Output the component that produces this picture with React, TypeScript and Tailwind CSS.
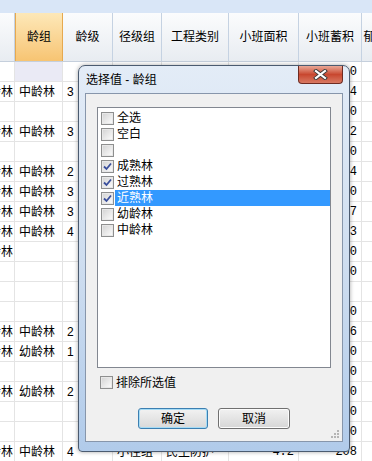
import React from "react";

const widths = ["w-[15px]", "w-[48px]", "w-[50px]", "w-[49px]", "w-[67px]", "w-[70px]", "w-[63px]", "w-[40px]"];
const headers = ["", "龄组", "龄级", "径级组", "工程类别", "小班面积", "小班蓄积", "郁闭度"];

// cells under the dialog are left empty, only the last row peeks out below it
const rows: string[][] = [
    ["", "", "", "", "", "", "0"],
    ["中龄林", "中龄林", "3", "", "", "", "4"],
    ["", "", "", "", "", "", "0"],
    ["中龄林", "中龄林", "3", "", "", "", "2"],
    ["", "", "", "", "", "", "0"],
    ["中龄林", "中龄林", "2", "", "", "", "4"],
    ["中龄林", "中龄林", "3", "", "", "", "0"],
    ["中龄林", "中龄林", "3", "", "", "", "7"],
    ["中龄林", "中龄林", "4", "", "", "", "3"],
    ["中龄林", "", "", "", "", "", "0"],
    ["", "", "", "", "", "", "0"],
    ["", "", "", "", "", "", ""],
    ["", "", "", "", "", "", "0"],
    ["中龄林", "中龄林", "2", "", "", "", "6"],
    ["中龄林", "幼龄林", "1", "", "", "", "0"],
    ["", "", "", "", "", "", "0"],
    ["中龄林", "幼龄林", "2", "", "", "", "0"],
    ["", "", "", "", "", "", "0"],
    ["", "", "", "", "", "", "0"],
    ["中龄林", "中龄林", "4", "小径组", "民生防护", "4.2", "208"],
];

const options = [
    { label: "全选", checked: false },
    { label: "空白", checked: false },
    { label: "", checked: false },
    { label: "成熟林", checked: true },
    { label: "过熟林", checked: true },
    { label: "近熟林", checked: true, selected: true },
    { label: "幼龄林", checked: false },
    { label: "中龄林", checked: false },
];

const CheckBox = ({ checked }: { checked: boolean }) => (
    <span className="flex h-[13px] w-[13px] shrink-0 items-center justify-center border border-[#8e8f8f] bg-[#f4f4f4]">
        <span className="flex h-[11px] w-[11px] items-center justify-center border border-[#e8e8e8] bg-linear-to-br from-[#d6d6d6] to-[#fafafa]">
            {checked && (
                <svg width="9" height="9" viewBox="0 0 9 9">
                    <path d="M1 4.5 L3.5 7 L8 1.5" fill="none" stroke="#3a4f9c" strokeWidth="1.8" />
                </svg>
            )}
        </span>
    </span>
);

const App = () => {
    return (
        <div className="relative h-[461px] w-[372px] overflow-hidden bg-white text-[12px] leading-none text-black font-['Liberation_Sans','Noto_Sans_CJK_SC',sans-serif]">
            {/* top band */}
            <div className="h-[13px] bg-[#d9e6f7]" />

            {/* header */}
            <div className="flex h-[49px] border-b border-[#c5cfdc] bg-linear-to-b from-[#fbfcfd] to-[#e8ecf1]">
                {headers.map((h, i) => (
                    <div
                        key={i}
                        className={`${widths[i]} flex shrink-0 items-center justify-center whitespace-nowrap border-r ${
                            i === 1
                                ? "border-l border-[#e6a94f] bg-linear-to-b from-[#fde8b8] to-[#f7c472]"
                                : "border-[#c5d2e2]"
                        }`}
                    >
                        {h}
                    </div>
                ))}
            </div>

            {/* body */}
            <div className="flex flex-col">
                {rows.map((r, ri) => (
                    <div key={ri} className="flex h-[20px] border-b border-[#e4e4e4]">
                        <div className={`${widths[0]} flex shrink-0 justify-end overflow-hidden border-r border-[#e4e4e4]`}>
                            <span className="flex items-center whitespace-nowrap pr-[1px]">{r[0]}</span>
                        </div>
                        <div className={`${widths[1]} flex shrink-0 items-center border-r border-[#e4e4e4] pl-[4px] ${ri === 0 ? "bg-[#eaeaf5]" : ""}`}>
                            {r[1]}
                        </div>
                        <div className={`${widths[2]} flex shrink-0 items-center border-r border-[#e4e4e4] pl-[4px]`}>{r[2]}</div>
                        <div className={`${widths[3]} flex shrink-0 items-center whitespace-nowrap border-r border-[#e4e4e4] pl-[4px]`}>{r[3]}</div>
                        <div className={`${widths[4]} flex shrink-0 items-center whitespace-nowrap border-r border-[#e4e4e4] pl-[4px]`}>{r[4]}</div>
                        <div className={`${widths[5]} flex shrink-0 items-center justify-end border-r border-[#e4e4e4] pr-[4px] font-['Liberation_Mono',monospace]`}>{r[5]}</div>
                        <div className={`${widths[6]} flex shrink-0 items-center justify-end border-r border-[#e4e4e4] pr-[4px] font-['Liberation_Mono',monospace]`}>{r[6]}</div>
                        <div className={`${widths[7]} shrink-0`} />
                    </div>
                ))}
            </div>

            {/* dialog window */}
            <div className="absolute left-[78px] top-[65px] flex h-[387px] w-[272px] flex-col rounded-t-[7px] rounded-b-[4px] border border-[#4b5b70] bg-linear-to-b from-[#e3ecf7] via-[#cfdef0] to-[#b1cbea] shadow-[0_0_4px_rgba(0,0,0,0.35)]">
                {/* title bar */}
                <div className="flex h-[27px] items-start justify-between">
                    <span className="mt-[8px] pl-[7px] whitespace-nowrap">选择值 - 龄组</span>
                    <button className="mr-[6px] flex h-[18px] w-[45px] items-center justify-center rounded-b-[4px] border border-t-0 border-[#6e2b22] bg-linear-to-b from-[#e8a796] via-[#c8472f] to-[#d87862]">
                        <svg width="15" height="11" viewBox="0 0 15 11">
                            <path d="M3 2 L12 9 M12 2 L3 9" stroke="#3a3a3a" strokeWidth="4" strokeLinecap="square" />
                            <path d="M3 2 L12 9 M12 2 L3 9" stroke="#ffffff" strokeWidth="2.2" strokeLinecap="square" />
                        </svg>
                    </button>
                </div>

                {/* client area */}
                <div className="relative mx-[6px] mb-[9px] flex flex-1 flex-col border border-[#8796ab] bg-[#f0f0f0]">
                    {/* list box */}
                    <div className="ml-[11px] mt-[13px] h-[261px] w-[234px] border border-[#828790] bg-white pt-[2px]">
                        {options.map((o, i) => (
                            <div key={i} className="flex h-[16px] items-center pl-[3px]">
                                <CheckBox checked={o.checked} />
                                <span
                                    className={`ml-[1px] flex h-full flex-1 items-center pl-[2px] whitespace-nowrap ${
                                        o.selected ? "bg-[#3399ff] text-white" : ""
                                    }`}
                                >
                                    {o.label}
                                </span>
                            </div>
                        ))}
                    </div>

                    {/* exclude option */}
                    <div className="ml-[14px] mt-[8px] flex items-center gap-[3px]">
                        <CheckBox checked={false} />
                        <span className="whitespace-nowrap">排除所选值</span>
                    </div>

                    {/* buttons */}
                    <div className="ml-[52px] mt-[19px] flex gap-[10px]">
                        <button className="flex h-[21px] w-[70px] items-center justify-center rounded-[3px] border border-[#3c7fb1] bg-linear-to-b from-[#f2f2f2] to-[#d9d9d9] shadow-[inset_0_0_0_1px_#a6dcf6]">
                            确定
                        </button>
                        <button className="flex h-[21px] w-[72px] items-center justify-center rounded-[3px] border border-[#707070] bg-linear-to-b from-[#f2f2f2] to-[#d6d6d6] shadow-[inset_0_0_0_1px_#fcfcfc]">
                            取消
                        </button>
                    </div>

                    {/* resize grip */}
                    <svg className="absolute bottom-[2px] right-[2px]" width="10" height="10" viewBox="0 0 10 10">
                        <rect x="7" y="1" width="2" height="2" fill="#b5b5b5" />
                        <rect x="4" y="4" width="2" height="2" fill="#b5b5b5" />
                        <rect x="7" y="4" width="2" height="2" fill="#b5b5b5" />
                        <rect x="1" y="7" width="2" height="2" fill="#b5b5b5" />
                        <rect x="4" y="7" width="2" height="2" fill="#b5b5b5" />
                        <rect x="7" y="7" width="2" height="2" fill="#b5b5b5" />
                    </svg>
                </div>
            </div>
        </div>
    );
};

export default App;
